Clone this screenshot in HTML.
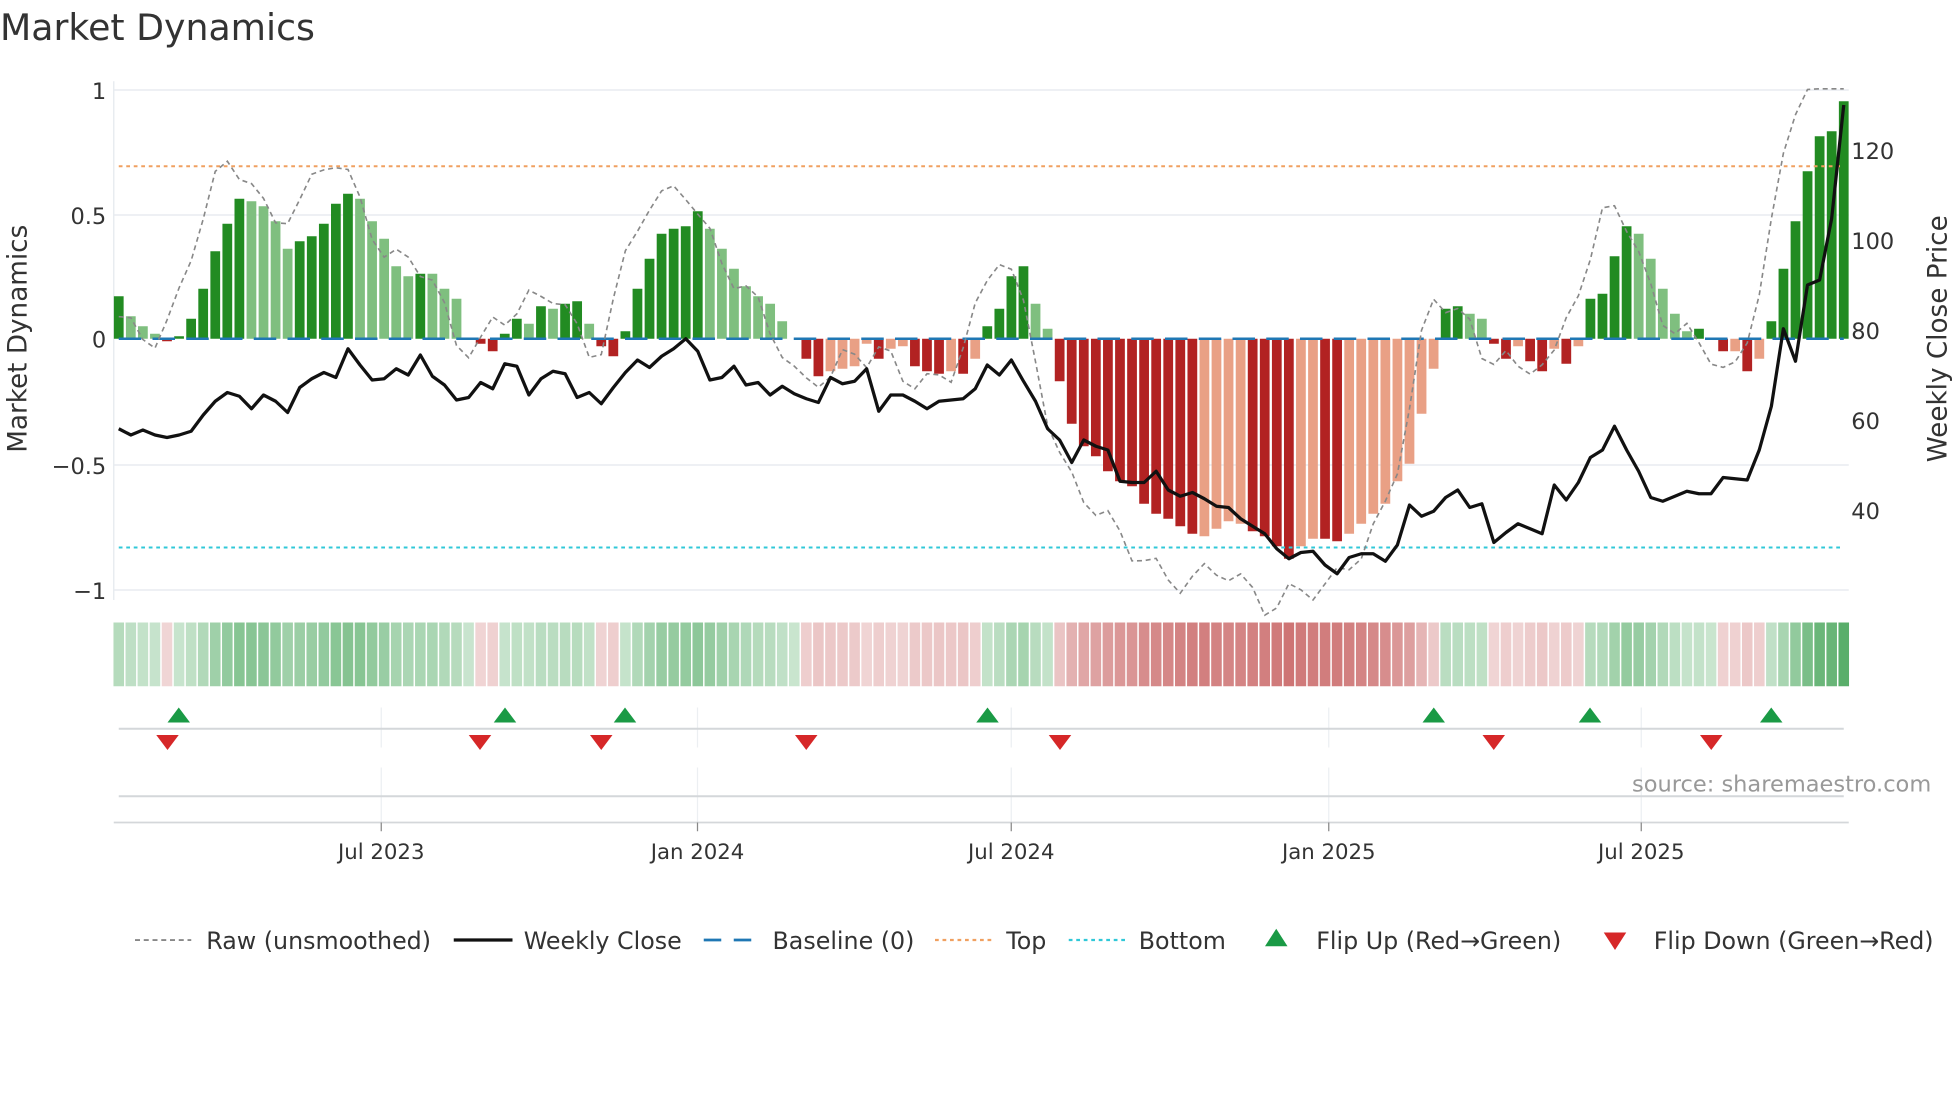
<!DOCTYPE html>
<html><head><meta charset="utf-8"><style>
html,body{margin:0;padding:0;background:#fff;}
svg{display:block;font-family:"DejaVu Sans","Liberation Sans",sans-serif;}
</style></head><body>
<svg id="s" width="1960" height="1102" viewBox="0 0 1568 881.6" xmlns="http://www.w3.org/2000/svg">
<rect width="1568" height="882" fill="#fff"/>
<text x="0" y="32" font-size="29" fill="#333">Market Dynamics</text>
<g stroke="#e8ecf0" stroke-width="1.2">
<line x1="91" y1="72" x2="1479" y2="72"/><line x1="91" y1="172" x2="1479" y2="172"/>
<line x1="91" y1="372" x2="1479" y2="372"/><line x1="91" y1="472" x2="1479" y2="472"/>
<line x1="91" y1="65" x2="91" y2="480"/>
</g>
<g font-size="18" fill="#333" text-anchor="end">
<text x="85" y="79">1</text><text x="85" y="179">0.5</text><text x="85" y="278">0</text>
<text x="85" y="379">−0.5</text><text x="85" y="479">−1</text></g>
<g font-size="18" fill="#333"><text x="1481" y="127">120</text><text x="1481" y="199">100</text><text x="1481" y="271">80</text><text x="1481" y="343">60</text><text x="1481" y="415">40</text></g>
<text transform="translate(21,271) rotate(-90)" font-size="21" fill="#333" text-anchor="middle">Market Dynamics</text>
<text transform="translate(1557,271) rotate(-90)" font-size="21" fill="#333" text-anchor="middle">Weekly Close Price</text>
<g id="bars"></g>
<line x1="95" y1="133" x2="1475" y2="133" stroke="#f0a060" stroke-width="1.6" stroke-dasharray="3,3"/>
<line x1="95" y1="438" x2="1475" y2="438" stroke="#30c8d8" stroke-width="1.6" stroke-dasharray="3,3"/>
<line x1="95" y1="271" x2="1475" y2="271" stroke="#1f77b4" stroke-width="2" stroke-dasharray="18,9"/>
<polyline id="raw" fill="none" stroke="#888" stroke-width="1.3" stroke-dasharray="4,3"/>
<polyline id="px" fill="none" stroke="#111" stroke-width="2.6" stroke-linejoin="round"/>
<g id="heat"></g>
<g stroke="#eceff2" stroke-width="1"><line x1="305" y1="566" x2="305" y2="598"/><line x1="558" y1="566" x2="558" y2="598"/><line x1="809" y1="566" x2="809" y2="598"/><line x1="1063" y1="566" x2="1063" y2="598"/><line x1="1313" y1="566" x2="1313" y2="598"/>
<line x1="305" y1="614" x2="305" y2="658"/><line x1="558" y1="614" x2="558" y2="658"/><line x1="809" y1="614" x2="809" y2="658"/><line x1="1063" y1="614" x2="1063" y2="658"/><line x1="1313" y1="614" x2="1313" y2="658"/></g>
<line x1="95" y1="583" x2="1475" y2="583" stroke="#d4d7da" stroke-width="1.6"/>
<line x1="95" y1="637" x2="1475" y2="637" stroke="#d4d7da" stroke-width="1.6"/>
<line x1="91" y1="658" x2="1479" y2="658" stroke="#d4d7da" stroke-width="1.4"/>
<g id="flips"></g>
<text x="1545" y="633" font-size="18" fill="#999" text-anchor="end">source: sharemaestro.com</text>
<g stroke="#888" stroke-width="1"><line x1="305" y1="658" x2="305" y2="665"/><line x1="558" y1="658" x2="558" y2="665"/><line x1="809" y1="658" x2="809" y2="665"/><line x1="1063" y1="658" x2="1063" y2="665"/><line x1="1313" y1="658" x2="1313" y2="665"/></g>
<g font-size="17" fill="#333" text-anchor="middle"><text x="305" y="687">Jul 2023</text><text x="558" y="687">Jan 2024</text><text x="809" y="687">Jul 2024</text><text x="1063" y="687">Jan 2025</text><text x="1313" y="687">Jul 2025</text></g>
<g font-size="19" fill="#333">
<line x1="108" y1="752" x2="153" y2="752" stroke="#888" stroke-width="1.5" stroke-dasharray="4,3"/><text x="165" y="759">Raw (unsmoothed)</text>
<line x1="363" y1="752" x2="410" y2="752" stroke="#111" stroke-width="2.6"/><text x="419" y="759">Weekly Close</text>
<line x1="563" y1="752" x2="605" y2="752" stroke="#1f77b4" stroke-width="2.2" stroke-dasharray="14,10"/><text x="618" y="759">Baseline (0)</text>
<line x1="748" y1="752" x2="793" y2="752" stroke="#f0a060" stroke-width="1.8" stroke-dasharray="3,3"/><text x="805" y="759">Top</text>
<line x1="855" y1="752" x2="900" y2="752" stroke="#30c8d8" stroke-width="1.8" stroke-dasharray="3,3"/><text x="911" y="759">Bottom</text>
<polygon points="1012,757 1030,757 1021,743" fill="#1a9a45"/><text x="1053" y="759">Flip Up (Red→Green)</text>
<polygon points="1283,746 1301,746 1292,760" fill="#d62728"/><text x="1323" y="759">Flip Down (Green→Red)</text>
</g>
</svg>
<script>
var B="D.17 L.09 L.05 L.02 R-.01 D.01 D.08 D.2 D.35 D.46 D.56 L.55 L.53 L.47 L.36 D.39 D.41 D.46 D.54 D.58 L.56 L.47 L.4 L.29 L.25 D.26 L.26 L.2 L.16 L.005 R-.02 R-.05 D.02 D.08 L.06 D.13 L.12 D.14 D.15 L.06 R-.03 R-.07 D.03 D.2 D.32 D.42 D.44 D.45 D.51 L.44 L.36 L.28 L.21 L.17 L.14 L.07 L0 R-.08 R-.15 P-.13 P-.12 P-.11 P-.02 R-.08 P-.04 P-.03 R-.11 R-.13 R-.14 P-.13 R-.14 P-.08 D.05 D.12 D.25 D.29 L.14 L.04 R-.17 R-.34 R-.43 R-.47 R-.53 R-.57 R-.59 R-.66 R-.7 R-.72 R-.75 R-.78 P-.79 P-.76 P-.73 P-.74 R-.77 R-.79 R-.83 R-.88 P-.83 P-.8 R-.8 R-.81 P-.78 P-.74 P-.7 P-.66 P-.57 P-.5 P-.3 P-.12 D.12 D.13 L.1 L.08 R-.02 R-.08 P-.03 R-.09 R-.13 P-.04 R-.1 P-.03 D.16 D.18 D.33 D.45 L.42 L.32 L.2 L.1 L.03 D.04 L0 R-.05 P-.05 R-.13 P-.08 D.07 D.28 D.47 D.67 D.81 D.83 D.95".split(" ");
var C={D:"#228b22",L:"#7fbf7f",R:"#b22222",P:"#e9a085"};
var n=B.length,dx=1380/(n-1),ns="http://www.w3.org/2000/svg";
function el(t,a,p){var e=document.createElementNS(ns,t);for(var k in a)e.setAttribute(k,a[k]);document.getElementById(p).appendChild(e);}
var vals=[];
B.forEach(function(s,i){var c=s[0],v=parseFloat(s.slice(1));vals.push(v);var x=95+i*dx;var y=271-v*200;
el("rect",{x:x-3.9,y:Math.min(y,271),width:7.8,height:Math.abs(v*200)||0,fill:C[c]},"bars");
var m=Math.min(1,Math.abs(v));
var col=v>=0.001||c=="D"||c=="L"?"rgba(60,160,80,"+(0.28+0.6*m)+")":"rgba(190,70,70,"+(0.22+0.6*m)+")";
el("rect",{x:x-dx/2+0.6,y:498,width:dx-1.2,height:51,fill:col},"heat");});
var r=[];for(var i=0;i<n;i++){var a=vals[Math.min(n-1,i+1)],b=vals[Math.min(n-1,i+2)];var v=a*1.25+(b-a)*0.6+0.04*Math.sin(i*1.7);if(v>1)v=1;r.push((95+i*dx).toFixed(1)+","+(271-v*200).toFixed(1));}
document.getElementById("raw").setAttribute("points",r.join(" "));
var P=[343,348,344,348,350,348,345,332,321,314,317,327,316,321,330,310,303,298,302,279,292,304,303,295,300,284,301,308,320,318,306,311,291,293,316,303,297,299,318,314,323,310,298,288,294,285,279,271,281,304,302,293,308,306,316,309,315,319,322,302,307,305,295,329,316,316,321,327,321,320,319,311,292,300,288,305,321,343,352,370,352,357,360,385,386,386,377,392,397,394,399,405,406,415,421,427,439,447,442,441,452,459,446,443,443,449,436,404,413,409,398,392,406,403,434,426,419,423,427,388,400,386,366,360,341,360,377,398,401,397,393,395,395,382,383,384,360,325,263,289,228,224,175,84];
var q=[];var m=P.length,ddx=1380/(m-1);P.forEach(function(y,i){q.push((95+i*ddx).toFixed(1)+","+y);});
document.getElementById("px").setAttribute("points",q.join(" "));
[143,404,500,790,1147,1272,1417].forEach(function(x){el("polygon",{points:(x-9)+",578 "+(x+9)+",578 "+x+",566",fill:"#1a9a45"},"flips");});
[134,384,481,645,848,1195,1369].forEach(function(x){el("polygon",{points:(x-9)+",588 "+(x+9)+",588 "+x+",600",fill:"#d62728"},"flips");});
</script>
</body></html>
